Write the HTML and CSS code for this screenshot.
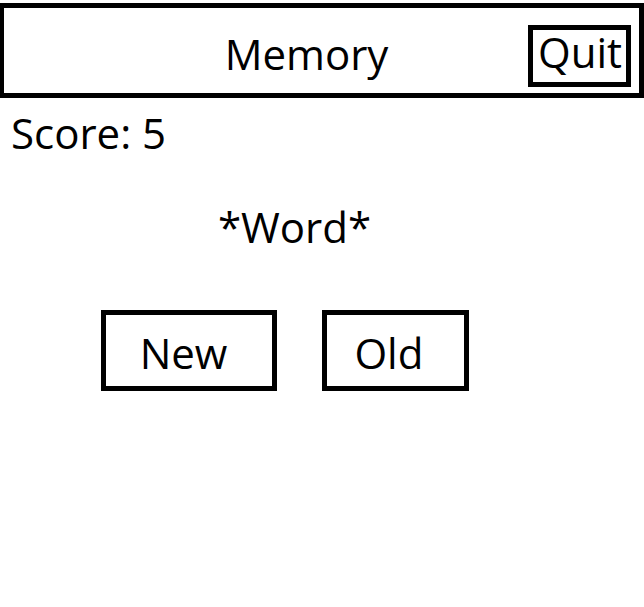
FILE: index.html
```html
<!DOCTYPE html>
<html lang="en">
<head>
<meta charset="utf-8">
<title>Memory</title>
<link rel="stylesheet" href="styles.css">
</head>
<body>
<header class="bar">
  <h1 class="title">Memory</h1>
  <button class="box quit" type="button">Quit</button>
</header>
<main class="game">
  <p class="score">Score: 5</p>
  <p class="word">*Word*</p>
  <div class="answers">
    <button class="box answer-new" type="button">New</button>
    <button class="box answer-old" type="button">Old</button>
  </div>
</main>
</body>
</html>
```
FILE: styles.css
```css
* {
  box-sizing: border-box;
}

body {
  margin: 0;
  padding-top: 3px;
  background: #fff;
  color: #000;
  font-family: "Open Sans", "Noto Sans", sans-serif;
  font-size: 42px;
  line-height: 44px;
}

.bar {
  display: grid;
  grid-template-columns: 1fr auto 1fr;
  align-items: start;
  padding: 17px 8px 6px;
  border: 5px solid #000;
  border-left-width: 4px;
}

.title {
  grid-column: 2;
  margin: 0;
  padding: 7px 30px 0 0;
  font-size: inherit;
  font-weight: 400;
}

.box {
  border: 5px solid #000;
  background: #fff;
  color: inherit;
  font: inherit;
}

.quit {
  justify-self: end;
  padding: 0 4px 8px 5px;
}

.game {
  padding: 13px 0;
}

.score,
.word {
  margin: 0;
}

.score {
  padding-left: 11px;
}

.word {
  margin-top: 50px;
  padding-right: 55px;
  text-align: center;
}

.answers {
  display: flex;
  justify-content: center;
  gap: 45px;
  margin-top: 61px;
  padding-right: 74px;
}

.answer-new {
  padding: 16px 45px 11px 34px;
}

.answer-old {
  padding: 16px 41px 11px 27px;
}
```
